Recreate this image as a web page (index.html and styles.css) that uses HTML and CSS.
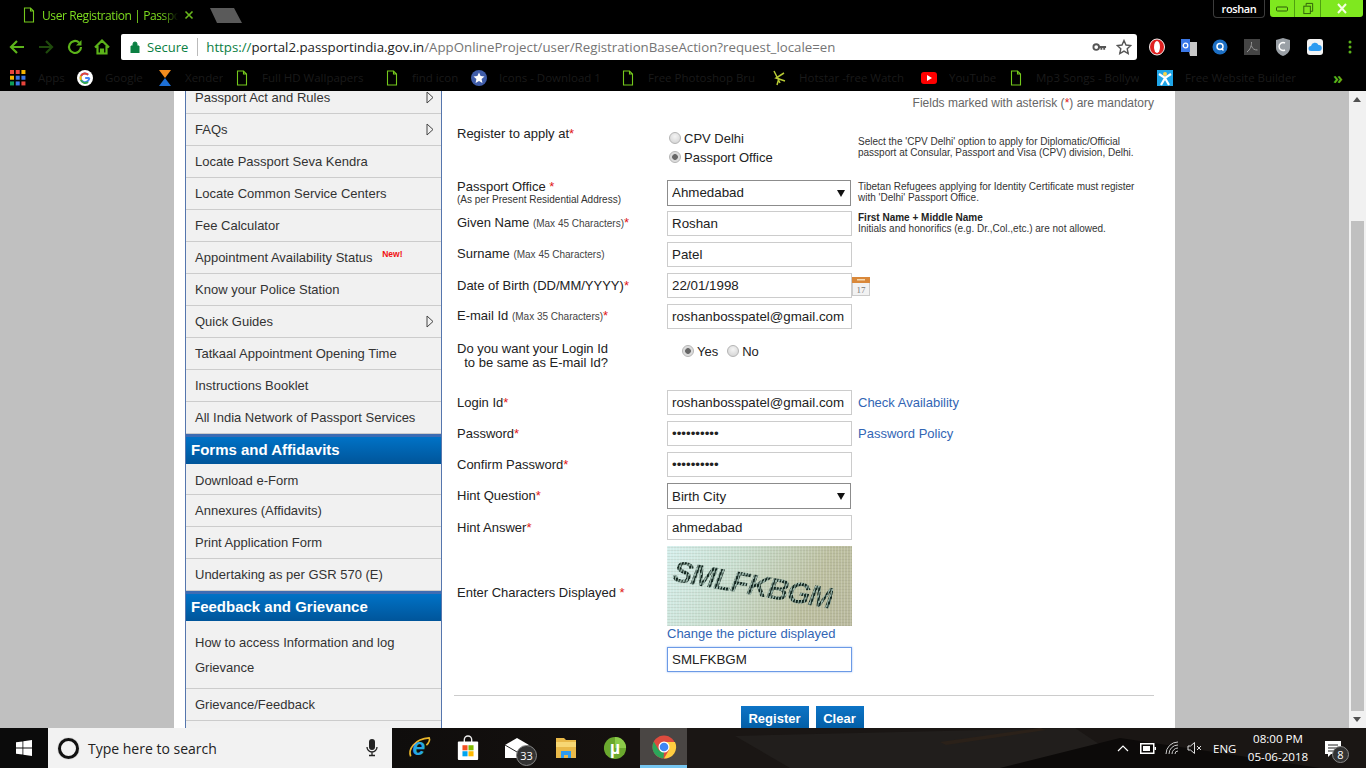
FILE: index.html
```html
<!DOCTYPE html>
<html lang="en">
<head>
<meta charset="utf-8">
<title>User Registration | Passport Seva</title>
<link rel="stylesheet" href="styles.css">
</head>
<body>
<div class="screen">
  <header class="chrome">
    <div class="tabstrip">
      <div class="tab">
        <svg class="doc" viewBox="0 0 12 16"><path d="M1.5 1h6l3 3v11h-9zM7.5 1v3h3"/></svg>
        <span class="tab-title">User Registration | Passpo</span>
        <svg class="tab-x" viewBox="0 0 10 10"><path d="M1.5 1.5l7 7M8.500 1.500l-7 7"/></svg>
      </div>
      <svg class="newtab" viewBox="0 0 32 15"><path d="M0 0h24l8 15H7z"/></svg>
      <div class="winbar">
        <div class="user">roshan</div>
        <div class="winbtns">
          <div class="winbtn w-min"><svg viewBox="0 0 14 10"><rect x="1.500" y="3.500" width="11" height="4" rx="1"/></svg></div>
          <div class="winbtn w-max"><svg viewBox="0 0 14 14"><rect x="2.500" y="4.500" width="7" height="8"/><path d="M5 4V1.500h7V10h-2.500"/></svg></div>
          <div class="winbtn w-close"><svg viewBox="0 0 14 12"><path d="M3 1.500l8 9M11 1.500l-8 9"/></svg></div>
        </div>
      </div>
    </div>
    <div class="toolbar">
      <div class="nav">
        <svg viewBox="0 0 18 18"><path d="M16 9H3M9 3L3 9l6 6"/></svg>
        <svg class="dim" viewBox="0 0 18 18"><path d="M2 9h13M9 3l6 6-6 6"/></svg>
        <svg viewBox="0 0 18 18"><path d="M15 9a6 6 0 1 1-2-4.500"/><path class="fill" d="M15.500 2v5.500H10z"/></svg>
        <svg class="home" viewBox="0 0 18 18"><path d="M2 9.500L9 2.500l7 7M4.500 8v7.500h3.500v-4h2v4h3.500V8"/></svg>
      </div>
      <div class="omnibox">
        <svg class="lock" viewBox="0 0 10 12"><path d="M1 5h8v7H1zM3 5V3a2 2 0 0 1 4 0v2" /></svg>
        <span class="secure">Secure</span>
        <span class="omni-sep"></span>
        <span class="url"><span class="u-scheme">https://</span><span class="u-host">portal2.passportindia.gov.in</span>/AppOnlineProject/user/RegistrationBaseAction?request_locale=en</span>
        <svg class="key" viewBox="0 0 16 10"><circle cx="4.500" cy="5" r="3"/><path d="M7 4h8v2h-1v2h-2V6h-1v2H9V6H7z"/></svg>
        <svg class="star" viewBox="0 0 16 16"><path d="M8 1.500l2 4.500 4.800.5-3.600 3.200 1 4.800L8 12.100 3.800 14.500l1-4.800L1.200 6.500 6 6z"/></svg>
      </div>
      <div class="exts">
        <svg viewBox="0 0 16 18"><ellipse cx="8" cy="9" rx="7.500" ry="8" fill="#e02020" stroke="#eee"/><ellipse cx="8" cy="9" rx="3" ry="6" fill="#fff"/></svg>
        <svg viewBox="0 0 16 18"><path fill="#c8c8c8" d="M6 4h10v14H9z"/><path fill="#3b78e7" d="M0 1h9v13H0z"/><circle cx="4.500" cy="7.500" r="2.300" fill="none" stroke="#fff" stroke-width="1.300"/></svg>
        <svg viewBox="0 0 16 18"><circle cx="8" cy="9" r="7.500" fill="#1c6fc4"/><circle cx="8" cy="8.500" r="3" fill="none" stroke="#fff" stroke-width="1.500"/><path d="M9.500 10.500l2 2" stroke="#fff" stroke-width="1.500"/></svg>
        <svg viewBox="0 0 16 18"><path fill="#444" d="M0 1h16v16H0z"/><path d="M3 14c3-2 5-7 4.500-10M7.500 8c1 3 3 4 6 4" fill="none" stroke="#999"/></svg>
        <svg viewBox="0 0 16 18"><path fill="#9aa0a6" d="M1 2l7-2 7 2v8c0 4-4 7-7 8-3-1-7-4-7-8z"/><path d="M10 5a4 4 0 1 0 0 7" fill="none" stroke="#fff" stroke-width="1.500"/></svg>
        <svg viewBox="0 0 16 18"><rect x="0" y="1" width="16" height="16" rx="3" fill="#f3f3f3"/><path fill="#2d9bf0" d="M4 13a2.500 2.500 0 0 1 0-5 4 4 0 0 1 7.500-1A3 3 0 0 1 12 13z"/></svg>
        <svg class="more" viewBox="0 0 4 18"><circle cx="2" cy="4" r="1.500"/><circle cx="2" cy="9" r="1.500"/><circle cx="2" cy="14" r="1.500"/></svg>
      </div>
    </div>
    <nav class="bookmarks">
      <div class="bm bm-apps"><svg viewBox="0 0 14 14"><g><rect width="3.500" height="3.500" fill="#e8453c"/><rect x="5" width="3.500" height="3.500" fill="#e8453c"/><rect x="10" width="3.500" height="3.500" fill="#f4b400"/><rect y="5" width="3.500" height="3.500" fill="#f4b400"/><rect x="5" y="5" width="3.500" height="3.500" fill="#3b78e7"/><rect x="10" y="5" width="3.500" height="3.500" fill="#3b78e7"/><rect y="10" width="3.500" height="3.500" fill="#0f9d58"/><rect x="5" y="10" width="3.500" height="3.500" fill="#3b78e7"/><rect x="10" y="10" width="3.500" height="3.500" fill="#e8453c"/></g></svg><span>Apps</span></div>
      <div class="bm"><svg viewBox="0 0 16 16"><circle cx="8" cy="8" r="8" fill="#fff"/><path d="M12.500 8H8.200M12.300 8a4.400 4.400 0 1 1-1.200-3.200" fill="none" stroke="#4285f4" stroke-width="2"/><path d="M11.100 4.800A4.400 4.400 0 0 0 4 6" fill="none" stroke="#ea4335" stroke-width="2"/><path d="M4 6a4.400 4.400 0 0 0 0 4" fill="none" stroke="#fbbc05" stroke-width="2"/><path d="M4 10a4.400 4.400 0 0 0 7 2" fill="none" stroke="#34a853" stroke-width="2"/></svg><span>Google</span></div>
      <div class="bm"><svg viewBox="0 0 14 16"><path fill="#f28c1e" d="M1 0h12L7 8z"/><path fill="#1d6fd6" d="M7 8l6 8H1z"/></svg><span>Xender</span></div>
      <div class="bm bm-doc"><svg class="doc" viewBox="0 0 12 16"><path d="M1.500 1h6l3 3v11h-9zM7.500 1v3h3"/></svg><span>Full HD Wallpapers</span></div>
      <div class="bm bm-doc"><svg class="doc" viewBox="0 0 12 16"><path d="M1.500 1h6l3 3v11h-9zM7.500 1v3h3"/></svg><span>find icon</span></div>
      <div class="bm"><svg viewBox="0 0 16 16"><circle cx="8" cy="8" r="8" fill="#3f5ca8"/><path fill="#fff" d="M8 2.500l1.600 3.600 3.900.4-2.900 2.600.8 3.900L8 11l-3.400 2 .8-3.900-2.900-2.600 3.900-.4z"/></svg><span>Icons - Download 1</span></div>
      <div class="bm bm-doc"><svg class="doc" viewBox="0 0 12 16"><path d="M1.500 1h6l3 3v11h-9zM7.500 1v3h3"/></svg><span>Free Photoshop Bru</span></div>
      <div class="bm"><svg viewBox="0 0 16 16"><path d="M3 1l6 12M13 3L5 8l9 3M8 8l-2 7" fill="none" stroke="#b7c934" stroke-width="1.500"/></svg><span>Hotstar -free Watch</span></div>
      <div class="bm"><svg viewBox="0 0 16 16"><rect y="2" width="16" height="12" rx="3" fill="#f00"/><path fill="#fff" d="M6 5l5 3-5 3z"/></svg><span>YouTube</span></div>
      <div class="bm bm-doc"><svg class="doc" viewBox="0 0 12 16"><path d="M1.500 1h6l3 3v11h-9zM7.500 1v3h3"/></svg><span>Mp3 Songs - Bollyw</span></div>
      <div class="bm"><svg viewBox="0 0 16 16"><rect width="16" height="16" fill="#1ea5e8"/><circle cx="8" cy="4" r="2" fill="#ffd54a"/><path d="M2 4l6 4 6-4M8 8l-4 7M8 8l4 7" fill="none" stroke="#fff" stroke-width="2.200"/></svg><span>Free Website Builder</span></div>
      <div class="bm-more">»</div>
    </nav>
  </header>

  <div class="viewport">
    <div class="page">
      <div class="container">
        <aside class="sidebar">
          <a class="item">Passport Act and Rules<svg class="arrow" viewBox="0 0 8 13"><path d="M1 1l6 5.500L1 12z"/></svg></a>
          <a class="item">FAQs<svg class="arrow" viewBox="0 0 8 13"><path d="M1 1l6 5.500L1 12z"/></svg></a>
          <a class="item">Locate Passport Seva Kendra</a>
          <a class="item">Locate Common Service Centers</a>
          <a class="item">Fee Calculator</a>
          <a class="item item-new">Appointment Availability Status <sup class="new">New!</sup></a>
          <a class="item">Know your Police Station</a>
          <a class="item">Quick Guides<svg class="arrow" viewBox="0 0 8 13"><path d="M1 1l6 5.500L1 12z"/></svg></a>
          <a class="item">Tatkaal Appointment Opening Time</a>
          <a class="item">Instructions Booklet</a>
          <a class="item">All India Network of Passport Services</a>
          <h3 class="side-head">Forms and Affidavits</h3>
          <a class="item item-first">Download e-Form</a>
          <a class="item item-up">Annexures (Affidavits)</a>
          <a class="item">Print Application Form</a>
          <a class="item">Undertaking as per GSR 570 (E)</a>
          <h3 class="side-head">Feedback and Grievance</h3>
          <a class="item item-tall">How to access Information and log Grievance</a>
          <a class="item">Grievance/Feedback</a>
          <a class="item"></a>
        </aside>

        <main class="content">
          <p class="mandatory">Fields marked with asterisk (<span class="req">*</span>) are mandatory</p>
          <form class="form">
            <div class="row row-register">
              <label class="lab">Register to apply at<span class="req">*</span></label>
              <div class="radios">
                <label class="radio-line"><input type="radio" name="at"> CPV Delhi</label>
                <label class="radio-line"><input type="radio" name="at" checked> Passport Office</label>
              </div>
              <p class="note note-register">Select the 'CPV Delhi' option to apply for Diplomatic/Official<br>passport at Consular, Passport and Visa (CPV) division, Delhi.</p>
            </div>
            <div class="row row-select">
              <label class="lab lab-stack">Passport Office <span class="req">*</span><small class="sub">(As per Present Residential Address)</small></label>
              <div class="select-wrap"><select class="select"><option>Ahmedabad</option></select></div>
              <p class="note note-top">Tibetan Refugees applying for Identity Certificate must register<br>with 'Delhi' Passport Office.</p>
            </div>
            <div class="row">
              <label class="lab">Given Name <small class="max">(Max 45 Characters)</small><span class="req">*</span></label>
              <input class="input" value="Roshan">
              <p class="note note-top"><b class="note-b">First Name + Middle Name</b><br>Initials and honorifics (e.g. Dr.,Col.,etc.) are not allowed.</p>
            </div>
            <div class="row">
              <label class="lab">Surname <small class="max">(Max 45 Characters)</small></label>
              <input class="input" value="Patel">
            </div>
            <div class="row">
              <label class="lab">Date of Birth (DD/MM/YYYY)<span class="req">*</span></label>
              <input class="input" value="22/01/1998">
              <svg class="cal" viewBox="0 0 18 19"><rect x=".5" y=".5" width="17" height="18" fill="#f2f2f2" stroke="#ccc"/><rect x="0" y="0" width="18" height="6" fill="#d9883a"/><rect x="5" y="2" width="8" height="1.500" fill="#f5d9b0"/><text x="9" y="16" class="cal-num">17</text></svg>
            </div>
            <div class="row">
              <label class="lab">E-mail Id <small class="max">(Max 35 Characters)</small><span class="req">*</span></label>
              <input class="input" value="roshanbosspatel@gmail.com">
            </div>
            <div class="row row-same">
              <label class="lab lab-two">Do you want your Login Id<br>&nbsp;&nbsp;to be same as E-mail Id?</label>
              <div class="radio-inline">
                <label class="radio-line"><input type="radio" name="same" checked> Yes</label>
                <label class="radio-line"><input type="radio" name="same"> No</label>
              </div>
            </div>
            <div class="row">
              <label class="lab">Login Id<span class="req">*</span></label>
              <input class="input" value="roshanbosspatel@gmail.com">
              <a class="link">Check Availability</a>
            </div>
            <div class="row">
              <label class="lab">Password<span class="req">*</span></label>
              <input class="input" type="password" value="roshan1234">
              <a class="link">Password Policy</a>
            </div>
            <div class="row">
              <label class="lab">Confirm Password<span class="req">*</span></label>
              <input class="input" type="password" value="roshan1234">
            </div>
            <div class="row row-select">
              <label class="lab">Hint Question<span class="req">*</span></label>
              <div class="select-wrap"><select class="select"><option>Birth City</option></select></div>
            </div>
            <div class="row">
              <label class="lab">Hint Answer<span class="req">*</span></label>
              <input class="input" value="ahmedabad">
            </div>
            <div class="row row-captcha">
              <label class="lab lab-captcha">Enter Characters Displayed <span class="req">*</span></label>
              <div class="captcha-col">
                <div class="captcha"><span class="captcha-text">SMLFKBGM</span></div>
                <a class="link link-change">Change the picture displayed</a>
                <input class="input input-focus" value="SMLFKBGM">
              </div>
            </div>
          </form>
          <hr class="rule">
          <div class="actions">
            <button type="button" class="btn btn-register">Register</button>
            <button type="button" class="btn btn-clear">Clear</button>
          </div>
        </main>
      </div>
    </div>
    <div class="scrollbar">
      <svg class="sb-arrow" viewBox="0 0 8 5"><path d="M4 0l4 5H0z"/></svg>
      <div class="sb-thumb"></div>
      <svg class="sb-arrow" viewBox="0 0 8 5"><path d="M4 5L0 0h8z"/></svg>
    </div>
  </div>

  <footer class="taskbar">
    <svg class="wall" viewBox="0 0 1366 40" preserveAspectRatio="none"><path fill="#211e1c" d="M735 8l340-8 60 40H790z"/><path fill="#2b2119" d="M940 14l100-14 6 2-100 15z"/><path fill="#0c0a09" d="M1000 40l120-30 200 30z"/></svg>
    <div class="start"><svg viewBox="0 0 16 16"><path d="M0 2.300l6.500-.9v6.200H0zM7.300 1.300L16 0v7.600H7.300zM0 8.400h6.500v6.200L0 13.700zM7.300 8.400H16V16l-8.700-1.300z"/></svg></div>
    <div class="search">
      <span class="cortana"></span>
      <span class="search-text">Type here to search</span>
      <svg class="mic" viewBox="0 0 12 18"><rect x="3" y="0" width="6" height="11" rx="3" fill="#222"/><path d="M1 8a5 5 0 0 0 10 0M6 13v3M3 16.500h6" fill="none" stroke="#222" stroke-width="1.300"/></svg>
    </div>
    <div class="apps">
      <div class="app"><svg viewBox="0 0 26 26"><path d="M4 22C1 15 8 3 24 2c1 2 0 5-3 8" fill="none" stroke="#e8b52a" stroke-width="1.800"/><text x="13" y="21" class="ie">e</text></svg></div>
      <div class="app"><svg viewBox="0 0 24 26"><path fill="none" stroke="#eee" stroke-width="1.500" d="M8 7V4a4 4 0 0 1 8 0v3"/><rect x="1" y="6" width="22" height="20" rx="1" fill="#fff"/><rect x="6" y="10" width="5.500" height="5.500" fill="#f25022"/><rect x="12.500" y="10" width="5.500" height="5.500" fill="#7fba00"/><rect x="6" y="16.500" width="5.500" height="5.500" fill="#00a4ef"/><rect x="12.500" y="16.500" width="5.500" height="5.500" fill="#ffb900"/></svg></div>
      <div class="app app-badge"><svg viewBox="0 0 24 20"><path fill="#fff" d="M0 7L12 0l12 7v13H0z"/><path fill="none" stroke="#222" d="M0 7l12 7 12-7"/></svg><span class="badge">33</span></div>
      <div class="app"><svg viewBox="0 0 24 24"><path fill="#e9b949" d="M2 2h8l2 2h10v18H2z"/><path fill="#f7d774" d="M2 6h20v5H2z"/><path fill="#2d9bf0" d="M7 22v-7h10v7h-3v-3h-4v3z"/></svg></div>
      <div class="app"><svg viewBox="0 0 26 26"><circle cx="13" cy="13" r="12" fill="#6aa82e"/><path fill="#8ccc4a" d="M13 1a12 12 0 0 1 12 12H13z"/><text x="13" y="19" class="mu">µ</text></svg></div>
      <div class="app app-active"><svg viewBox="0 0 24 24"><circle cx="12" cy="12" r="11.500" fill="#dd4b3e"/><path fill="#ffcd40" d="M12 7h11a11.500 11.500 0 0 1-11 16.500l5-8.500z"/><path fill="#2ca65a" d="M1.800 6.500L7 15.500l5 1 -.5 7A11.500 11.500 0 0 1 1.800 6.500z"/><circle cx="12" cy="12" r="5.500" fill="#fff"/><circle cx="12" cy="12" r="4.300" fill="#3f86f4"/></svg></div>
    </div>
    <div class="tray">
      <svg class="t-chev" viewBox="0 0 12 7"><path d="M1 6l5-5 5 5"/></svg>
      <svg class="t-batt" viewBox="0 0 16 11"><rect x=".75" y=".75" width="13" height="9.500" fill="none" stroke="#fff" stroke-width="1.500"/><rect x="3" y="3" width="7" height="5" fill="#fff"/><rect x="14.500" y="4" width="1.500" height="3" fill="#fff"/></svg>
      <svg class="t-wifi" viewBox="0 0 14 14"><path d="M1 13A12 12 0 0 1 13 1M4 13a9 9 0 0 1 9-9M7 13a6 6 0 0 1 6-6M10 13a3 3 0 0 1 3-3"/></svg>
      <svg class="t-vol" viewBox="0 0 15 14"><path d="M1 5h2.500L7.500 1.500v11L3.500 9H1zM10 5l4 4M14 5l-4 4"/></svg>
      <span class="t-lang">ENG</span>
      <div class="t-clock"><span>08:00 PM</span><span>05-06-2018</span></div>
      <div class="t-notif">
        <svg viewBox="0 0 16 16"><path fill="#fff" d="M0 0h16v13H6l-3 3v-3H0z"/><path stroke="#222" d="M3 4h10M3 7h10M3 10h7"/></svg>
        <span class="badge badge-small">8</span>
      </div>
    </div>
  </footer>
</div>
</body>
</html>
```

FILE: styles.css
```css
* { box-sizing: border-box; }
html, body { margin: 0; padding: 0; height: 100%; overflow: hidden; }
body { font-family: "Liberation Sans", Arial, sans-serif; background: #000; }
.screen { width: 1366px; height: 768px; display: flex; flex-direction: column; overflow: hidden; }

/* browser chrome */
.chrome { height: 91px; flex: none; background: #000; font-family: "Open Sans", sans-serif; }
.tabstrip { height: 30px; display: flex; align-items: flex-start; position: relative; }
.tab { width: 202px; height: 30px; display: flex; align-items: center; padding-left: 23px; color: #7ddc1f; }
.doc { width: 12px; height: 16px; flex: none; fill: none; stroke: #74c81c; stroke-width: 1.1; }
.tab-title { margin-left: 7px; width: 136px; white-space: nowrap; font-size: 12px; letter-spacing: -.4px; -webkit-mask-image: linear-gradient(90deg, #000 88%, transparent); mask-image: linear-gradient(90deg, #000 88%, transparent); }
.tab-x { width: 10px; height: 10px; margin-left: 6px; fill: none; stroke: #6ab81c; stroke-width: 1.6; flex: none; }
.newtab { width: 32px; height: 15px; margin: 8px 0 0 8px; fill: #5a5a5a; }
.winbar { margin-left: auto; display: flex; align-items: flex-start; padding-right: 3px; }
.user { width: 52px; height: 18px; margin-right: 5px; border: 1px solid #3c3c3c; border-top: 0; border-radius: 0 0 4px 4px; color: #fff; font-size: 11px; font-weight: 600; letter-spacing: -.4px; line-height: 17px; text-align: center; }
.winbtns { display: flex; height: 17px; background: #7fe81f; border-radius: 0 0 3px 3px; width: 93px; }
.winbtn { display: flex; align-items: center; justify-content: center; border-right: 1px solid #4fa010; }
.winbtn svg { fill: none; stroke: #2c5a08; stroke-width: 1; height: 13px; width: 14px; }
.w-min { width: 25px; }
.w-max { width: 26px; }
.w-close { width: 42px; border-right: 0; }
.w-close svg { stroke: #f4ffe0; stroke-width: 2; }

.toolbar { height: 34px; display: flex; align-items: flex-start; padding-top: 4px; }
.nav { width: 121px; height: 26px; display: flex; align-items: center; padding-left: 8px; gap: 11px; flex: none; }
.nav svg { width: 18px; height: 18px; fill: none; stroke: #5cb31a; stroke-width: 2.200; flex: none; }
.nav svg.dim { stroke: #1f4a0c; }
.nav svg.home { margin-left: -2px; }
.nav .fill { fill: #5cb31a; stroke: none; }
.omnibox { width: 1016px; height: 26px; flex: none; background: #fff; border-radius: 2px 3px 3px 2px; display: flex; align-items: center; padding-left: 9px; font-size: 14px; white-space: nowrap; }
.lock { width: 10px; height: 12px; fill: #0b8043; stroke: #0b8043; flex: none; }
.lock path { fill-rule: evenodd; }
.secure { color: #0b8043; margin-left: 7px; font-size: 13px; }
.omni-sep { width: 1px; height: 18px; background: #bbb; margin: 0 8px 0 9px; }
.url { color: #757575; font-family: "Open Sans", sans-serif; font-size: 13.25px; }
.u-scheme { color: #0b8043; }
.u-host { color: #222; }
.key { width: 15px; height: 10px; margin-left: auto; fill: #555; flex: none; }
.key circle { fill: none; stroke: #555; stroke-width: 2; }
.star { width: 16px; height: 16px; margin: 0 5px 0 9px; fill: none; stroke: #555; stroke-width: 1.400; flex: none; }
.exts { flex: 1; height: 26px; display: flex; align-items: center; }
.exts svg { width: 16px; height: 18px; flex: none; margin-left: 15.500px; }
.exts svg:first-child { margin-left: 12px; }
.exts .more { width: 4px; margin-left: 25px; fill: #5cb31a; }

.bookmarks { height: 27px; display: grid; grid-template-columns: 67px 80px 76px 150px 88px 148px 152px 150px 86px 150px 176px 1fr; padding-left: 10px; align-items: center; }
.bm { display: flex; align-items: center; gap: 12px; overflow: hidden; white-space: nowrap; font-size: 11.5px; color: #1a1a1a; padding-right: 6px; }
.bm svg { width: 16px; height: 16px; flex: none; }
.bm-apps { gap: 12px; }
.bm-doc { padding-left: 3px; gap: 14px; }
.bm .doc { width: 12px; }
.bm span { overflow: hidden; }
.bm-more { color: #5cb31a; font-size: 16px; font-weight: 700; line-height: 20px; }

/* page */
.viewport { height: 637px; flex: none; display: flex; background: #c0c0c0; overflow: hidden; }
.page { flex: 1; display: flex; padding-left: 174px; overflow: hidden; }
.container { width: 1001px; height: 700px; background: #fff; display: flex; padding-left: 11px; flex: none; }
.scrollbar { width: 17px; flex: none; background: #f1f1f1; display: flex; flex-direction: column; align-items: center; padding-top: 6px; }
.sb-arrow { width: 8px; height: 5px; fill: #505050; flex: none; margin-left: -1px; }
.sb-thumb { width: 13px; height: 490px; background: #c0c0c0; margin: 119px 0 6px -1px; flex: none; }

.sidebar { width: 257px; flex: none; margin-top: -9px; height: 720px; background: #f1f1f1; border-left: 1px solid #5576ad; border-right: 1px solid #5576ad; font-size: 13px; color: #333; }
.item { height: 32px; display: flex; align-items: center; justify-content: space-between; padding: 0 7px 1px 9px; border-bottom: 1px solid #ccc; }
.arrow { width: 8px; height: 13px; fill: none; stroke: #444; flex: none; }
.item-new { justify-content: flex-start; white-space: pre; }
.new { color: #f01010; font-size: 8.500px; font-weight: 700; margin-left: 6px; position: relative; top: -3px; line-height: 1; vertical-align: baseline; }
.item-first { height: 31px; padding-top: 4px; }
.item-up { padding-bottom: 1px; }
.item-tall { height: 68px; display: block; line-height: 25px; padding-top: 9px; padding-right: 30px; }
.side-head { height: 30px; margin: 0; border-top: 3px solid #3d6cb3; background: linear-gradient(#0072c6, #00559a); color: #fff; font-size: 15px; font-weight: 700; line-height: 26px; padding-left: 5px; }

.content { flex: 1; padding: 0 21px 0 12px; min-width: 0; }
.mandatory { height: 34px; margin: 0; padding: 5px 0 0; text-align: right; font-size: 12px; line-height: 15px; color: #666; }
.req { color: #e01818; }
.form { display: flex; flex-direction: column; gap: 6px; padding-left: 3px; }
.row { display: grid; grid-template-columns: 210px 185px 1fr; height: 25px; align-items: center; font-size: 13px; color: #222; }
.row-register { height: 48px; align-items: start; }
.row-select { height: 26px; }
.row-same { height: 49px; align-items: start; }
.row-captcha { height: 126px; align-items: start; }
.lab { line-height: 18px; white-space: nowrap; }
.lab-stack { line-height: 14px; padding-top: 1px; }
.sub { display: block; font-size: 10px; line-height: 12px; color: #333; }
.max { font-size: 10px; color: #444; }
.lab-two { line-height: 14px; padding-top: 7px; }
.lab-captcha { padding-top: 38px; }
.radios { padding-top: 4px; padding-left: 2px; display: flex; flex-direction: column; }
.radio-line { line-height: 19px; display: flex; align-items: center; gap: 3px; white-space: nowrap; }
.radio-inline { padding: 7px 0 0 15px; display: flex; gap: 9px; }
input[type="radio"] { appearance: none; -webkit-appearance: none; width: 12px; height: 12px; margin: 0; border-radius: 50%; border: 1px solid #b4b4b4; background: radial-gradient(circle at 50% 35%, #f4f4f4, #d0d0d0); flex: none; position: relative; top: -1px; }
input[type="radio"]:checked { background: radial-gradient(circle, #666 0, #666 2.500px, #d8d8d8 3.200px, #e8e8e8 100%); }
.note { margin: 0; padding-left: 6px; font-size: 10px; line-height: 11px; color: #333; white-space: nowrap; }
.note-register { padding-top: 10.500px; }
.note-top { align-self: start; padding-top: 1px; }
.row-select .note-top { padding-top: 2px; }
.note-b { color: #222; }
.input { width: 185px; height: 25px; border: 1px solid #ccc; background: #fff; padding: 0 4px 1px; font: 13.33px "Liberation Sans", Arial, sans-serif; color: #222; outline: 0; border-radius: 0; }
.input-focus { border-color: #6c9ae6; box-shadow: 0 0 2px #9dbdf3; }
.select-wrap { width: 184px; height: 26px; position: relative; }
.select-wrap::after { content: ""; position: absolute; right: 6px; top: 10px; border: 4px solid transparent; border-top: 7px solid #111; border-bottom: 0; }
.select { appearance: none; -webkit-appearance: none; width: 100%; height: 100%; border: 1px solid #8c8c8c; background: #fff; padding: 0 4px; font: 13.33px "Liberation Sans", Arial, sans-serif; color: #222; border-radius: 0; }
.link { color: #3265b4; padding-left: 6px; white-space: nowrap; padding-bottom: 1px; }
.cal { width: 18px; height: 19px; margin-top: 2px; }
.cal-num { font: 9px "Liberation Serif", serif; fill: #777; text-anchor: middle; }
.captcha-col { display: flex; flex-direction: column; }
.captcha { width: 185px; height: 80px; overflow: hidden; display: flex; align-items: center; justify-content: center; padding: 0 14px 3px 0; background:
  repeating-linear-gradient(90deg, rgba(255,255,255,.18) 0 1px, transparent 1px 3px),
  repeating-linear-gradient(0deg, rgba(120,120,100,.14) 0 1px, transparent 1px 3px),
  linear-gradient(115deg, #d6f0ee 0%, #c9dfd0 35%, #bcbf9f 75%, #b8b89c 100%); }
.captcha-text { font: italic 700 30px "Liberation Sans", Arial, sans-serif; letter-spacing: -1.500px; transform: rotate(10deg); background: repeating-linear-gradient(100deg, #13261f 0 1.500px, #9ab5aa 1.500px 2.800px); -webkit-background-clip: text; background-clip: text; color: transparent; flex: none; }
.link-change { padding: 0; height: 21px; line-height: 15px; }
.rule { border: 0; border-top: 1px solid #ccc; margin: 23px 0 10px 0; width: 700px; }
.actions { display: flex; justify-content: center; gap: 7px; padding-right: 4px; }
.btn { height: 28px; border: 0; background: linear-gradient(#0d74c6, #00599e); color: #fff; font: 700 13px/24px "Liberation Sans", Arial, sans-serif; padding: 0 0 2px; border-radius: 0; }
.btn-register { width: 68px; }
.btn-clear { width: 48px; }

/* taskbar */
.taskbar { height: 40px; flex: none; display: flex; position: relative; background: #1a1614; font-family: "Open Sans", sans-serif; color: #fff; }
.wall { position: absolute; inset: 0; width: 100%; height: 100%; }
.start, .search, .apps, .tray { position: relative; }
.start { width: 48px; background: #0b0b0b; display: flex; align-items: center; justify-content: center; }
.start svg { width: 16px; height: 16px; fill: #fff; }
.search { width: 344px; background: #f2f2f2; color: #222; display: flex; align-items: center; padding: 0 14px 0 10px; }
.cortana { width: 21px; height: 21px; border: 3px solid #111; border-radius: 50%; box-shadow: 0 0 1px #555; flex: none; }
.search-text { margin-left: 9px; font-size: 14px; }
.mic { width: 12px; height: 18px; margin-left: auto; }
.apps { display: flex; width: 295px; background: linear-gradient(90deg, #0f0d0c, #15110f 80%); }
.app { width: 49px; height: 40px; display: flex; align-items: center; justify-content: center; position: relative; }
.app svg { width: 24px; height: 24px; overflow: visible; }
.app-active { margin-left: auto; width: 47px; background: #4a4644; border-bottom: 3px solid #76c6f0; margin-right: 0; }
.apps .app:nth-child(1) { margin-left: 2px; }
.ie { font: italic 700 25px "Liberation Sans", sans-serif; fill: #26a8e0; text-anchor: middle; }
.mu { font: 700 19px "Liberation Sans", sans-serif; fill: #fff; text-anchor: middle; }
.badge { position: absolute; left: 24px; top: 17px; width: 21px; height: 21px; border-radius: 50%; background: #333; border: 1px solid #888; color: #fff; font-size: 11px; line-height: 19px; text-align: center; }
.tray { margin-left: auto; display: flex; align-items: center; font-size: 12px; height: 40px; }
.t-chev { width: 12px; height: 7px; fill: none; stroke: #fff; stroke-width: 1.200; margin-right: 11px; }
.t-batt { width: 16px; height: 11px; margin-right: 9px; }
.t-wifi { width: 14px; height: 14px; fill: none; stroke: #ccc; stroke-width: 1; margin-right: 8px; }
.t-vol { width: 15px; height: 14px; fill: none; stroke: #ddd; margin-right: 11px; }
.t-lang { width: 27px; font-size: 11.500px; }
.t-clock { width: 70px; margin: 0 9px 0 3px; display: flex; flex-direction: column; align-items: center; font-size: 11.600px; line-height: 18px; }
.t-notif { width: 44px; height: 40px; position: relative; padding: 13px 0 0 3px; }
.t-notif svg { width: 16px; height: 16px; display: block; }
.badge-small { left: 10px; top: 18px; width: 17px; height: 17px; line-height: 15px; }
```
